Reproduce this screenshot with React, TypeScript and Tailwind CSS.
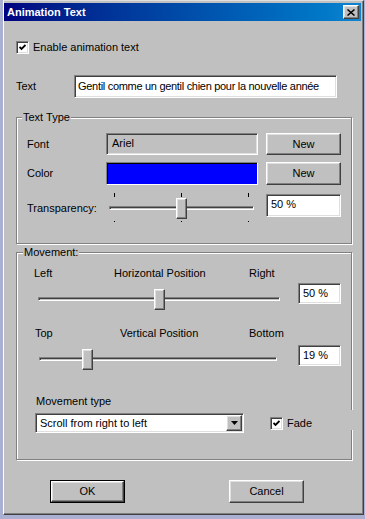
import { useState } from 'react'

const raised =
  'border border-t-white border-l-white border-r-[#404040] border-b-[#404040] shadow-[inset_-1px_-1px_0_#808080,inset_1px_1px_0_#dfdfdf] bg-[#c0c0c0]'
const sunken =
  'border border-t-[#808080] border-l-[#808080] border-r-white border-b-white shadow-[inset_1px_1px_0_#404040,inset_-1px_-1px_0_#dfdfdf]'

function CheckBox({ checked }: { checked: boolean }) {
  return (
    <div className={`flex h-[13px] w-[13px] shrink-0 items-center justify-center bg-white ${sunken}`}>
      {checked && (
        <svg width="7" height="7" viewBox="0 0 7 7">
          <path d="M0.5 3 L2.5 5 L6.5 1" fill="none" stroke="#000" strokeWidth="1.8" />
        </svg>
      )}
    </div>
  )
}

interface SliderProps {
  width: number
  thumb: number
  ticks?: number[]
}

// classic trackbar, thumb + ticks drawn over the track
function Slider({ width, thumb, ticks }: SliderProps) {
  const top = ticks ? 5 : 0
  return (
    <div className="relative shrink-0" style={{ width, height: ticks ? 29 : 21 }}>
      <div
        className="absolute left-0 right-0 h-[4px] border border-t-[#808080] border-l-[#808080] border-r-white border-b-white shadow-[inset_1px_1px_0_#404040]"
        style={{ top: top + 8 }}
      />
      {ticks?.map((t) => (
        <div key={'t' + t} className="absolute top-0 h-[4px] w-[1px] bg-black" style={{ left: t }} />
      ))}
      {ticks?.map((t) => (
        <div key={'b' + t} className="absolute top-[28px] h-[1px] w-[1px] bg-black" style={{ left: t }} />
      ))}
      <div className={`absolute h-[21px] w-[11px] ${raised}`} style={{ left: thumb, top }} />
    </div>
  )
}

function Button({ label, isDefault }: { label: string; isDefault?: boolean }) {
  if (isDefault) {
    return (
      <div className="h-[23px] w-[75px] border border-black">
        <button className={`flex h-full w-full items-center justify-center ${raised}`}>{label}</button>
      </div>
    )
  }
  return (
    <button className={`flex h-[23px] w-[75px] items-center justify-center ${raised}`}>{label}</button>
  )
}

function ValueBox({ value, w, h }: { value: string; w: number; h: number }) {
  return (
    <div className={`flex shrink-0 items-start bg-white pl-[4px] pt-[3px] ${sunken}`} style={{ width: w, height: h }}>
      {value}
    </div>
  )
}

export default function App() {
  const [enabled, setEnabled] = useState(true)
  const [fade, setFade] = useState(true)

  return (
    <div className="h-[519px] w-[365px] overflow-hidden bg-[#a9b0d2] pl-[3px] font-['Liberation_Sans',Arial,sans-serif] text-[11px] leading-[13px] text-black">
      <div className="flex h-[515px] w-[361px] flex-col border border-t-[#dfdfdf] border-l-white border-r-[#404040] border-b-[#404040] bg-[#c0c0c0] shadow-[inset_-1px_-1px_0_#808080]">
        {/* title bar */}
        <div className="mt-[2px] mr-[2px] flex h-[18px] items-center justify-between bg-gradient-to-r from-[#000080] to-[#1084d0] pl-[3px] pr-[2px]">
          <span className="font-bold text-white">Animation Text</span>
          <button className={`flex h-[14px] w-[16px] items-center justify-center ${raised}`}>
            <svg width="8" height="7" viewBox="0 0 8 7">
              <path d="M0.5 0.5 L7.5 6.5 M7.5 0.5 L0.5 6.5" stroke="#000" strokeWidth="1.5" />
            </svg>
          </button>
        </div>

        <div className="flex flex-col pl-[12px]">
          <div className="mt-[20px] flex h-[13px] items-center gap-[4px]" onClick={() => setEnabled(!enabled)}>
            <CheckBox checked={enabled} />
            <span>Enable animation text</span>
          </div>

          <div className="mt-[21px] flex h-[23px] items-center">
            <span className="w-[58px]">Text</span>
            <div className={`flex h-[23px] w-[263px] items-center overflow-hidden whitespace-nowrap bg-white pl-[3px] tracking-[-0.3px] ${sunken}`}>
              Gentil comme un gentil chien pour la nouvelle année
            </div>
          </div>

          {/* Text Type group */}
          <div className="relative mt-[19px] h-[127px] w-[336px] border border-[#808080] pl-[10px] pt-[15px] shadow-[inset_1px_1px_0_#fff,1px_1px_0_#fff]">
            <span className="absolute -top-[7px] left-[5px] bg-[#c0c0c0] px-[1px]">Text Type</span>
            <div className="flex h-[22px] items-center">
              <span className="w-[79px]">Font</span>
              <div className={`flex h-[22px] w-[152px] items-start pl-[5px] pt-[3px] ${sunken}`}>Ariel</div>
              <div className="ml-[8px]">
                <button className={`flex h-[22px] w-[75px] items-center justify-center ${raised}`}>New</button>
              </div>
            </div>
            <div className="mt-[7px] flex h-[23px] items-center">
              <span className="w-[79px]">Color</span>
              <div className="h-[23px] w-[152px] border border-t-[#808080] border-l-[#808080] border-r-white border-b-white bg-[#0000ff] shadow-[inset_1px_1px_0_#000]" />
              <div className="ml-[8px]">
                <button className={`flex h-[23px] w-[75px] items-center justify-center ${raised}`}>New</button>
              </div>
            </div>
            <div className="mt-[8px] flex h-[29px] items-start">
              <span className="mt-[9px] w-[82px]">Transparency:</span>
              <Slider width={145} thumb={67} ticks={[5, 72, 139]} />
              <div className="ml-[12px] mt-[1px]">
                <ValueBox value="50 %" w={75} h={23} />
              </div>
            </div>
          </div>

          {/* Movement group */}
          <div className="relative mt-[8px] h-[208px] w-[336px] border border-[#808080] pl-[17px] pt-[14px] shadow-[inset_1px_1px_0_#fff,1px_1px_0_#fff]">
            <span className="absolute -top-[7px] left-[6px] bg-[#c0c0c0] px-[1px]">Movement:</span>
            <div className="flex h-[13px]">
              <span className="w-[80px]">Left</span>
              <span className="w-[135px]">Horizontal Position</span>
              <span>Right</span>
            </div>
            <div className="mt-[3px] flex items-start">
              <div className="ml-[4px] mt-[6px]">
                <Slider width={242} thumb={116} />
              </div>
              <div className="ml-[18px]">
                <ValueBox value="50 %" w={43} h={21} />
              </div>
            </div>
            <div className="mt-[17px] flex h-[13px]">
              <span className="ml-[1px] w-[85px]">Top</span>
              <span className="w-[129px]">Vertical Position</span>
              <span>Bottom</span>
            </div>
            <div className="mt-[5px] flex items-start">
              <div className="ml-[5px] mt-[4px]">
                <Slider width={238} thumb={43} />
              </div>
              <div className="ml-[21px]">
                <ValueBox value="19 %" w={43} h={21} />
              </div>
            </div>
            <div className="ml-[2px] mt-[25px] h-[13px]">Movement type</div>
            <div className="mt-[5px] flex h-[20px] items-center">
              <div className={`ml-[1px] flex h-[20px] w-[209px] items-center justify-between bg-white pl-[4px] pr-[1px] ${sunken}`}>
                <span>Scroll from right to left</span>
                <div className={`flex h-[16px] w-[16px] items-center justify-center ${raised}`}>
                  <svg width="7" height="4" viewBox="0 0 7 4">
                    <path d="M0 0 H7 L3.5 4 Z" fill="#000" />
                  </svg>
                </div>
              </div>
              <div className="ml-[26px] flex items-center gap-[4px]" onClick={() => setFade(!fade)}>
                <CheckBox checked={fade} />
                <span>Fade</span>
              </div>
            </div>
            {/* the Fade control covers part of the group's right edge */}
            <div className="absolute right-[-2px] top-[157px] h-[20px] w-[4px] bg-[#c0c0c0]" />
          </div>

          <div className="mt-[20px] flex items-center pl-[34px]">
            <Button label="OK" isDefault />
            <div className="ml-[104px]">
              <Button label="Cancel" />
            </div>
          </div>
        </div>
      </div>
    </div>
  )
}
